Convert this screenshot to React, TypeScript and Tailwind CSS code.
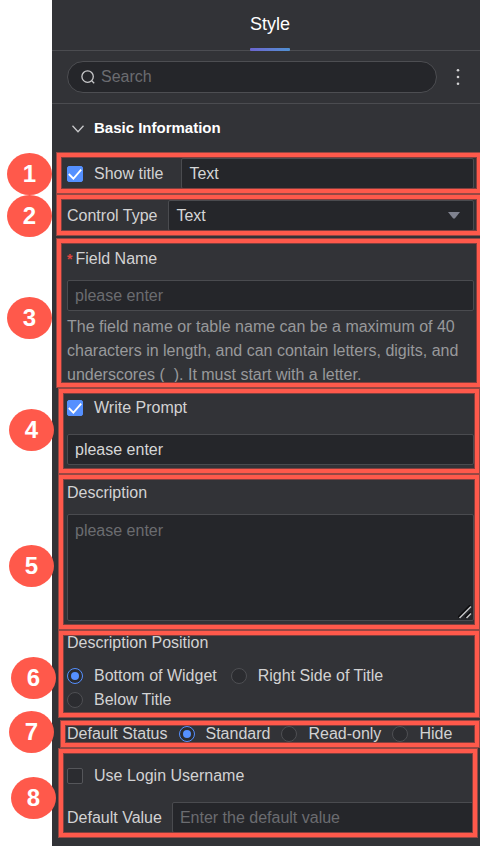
import { type InputHTMLAttributes, type ReactNode, useState } from "react";
import clsx from "clsx";

const fieldStyles =
  "h-[31px] min-w-0 flex-1 rounded-[2px] border border-[#4a4b4f] bg-[#25262a] px-[7px] text-base text-[#d6d6d7] placeholder-[#6b6c70] outline-none";

/* A form block with its numbered callout and the red frame laid over it. */
function Callout({
  number,
  badge,
  className,
  children,
}: {
  number: number;
  badge: string;
  className: string;
  children: ReactNode;
}) {
  return (
    <section className={clsx("relative", className)}>
      {children}
      <div
        aria-hidden="true"
        className="pointer-events-none absolute inset-0 border-4 border-[#ff594b] shadow-[inset_0_0_0_1px_#823f3e] outline-1 outline-[#964743]"
      />
      <span
        className={clsx(
          "absolute flex h-[42px] w-[45px] items-center justify-center rounded-[50%] bg-[#ff594b] text-2xl font-bold text-white",
          badge,
        )}
      >
        {number}
      </span>
    </section>
  );
}

function Checkbox({ label, ...props }: { label: string } & InputHTMLAttributes<HTMLInputElement>) {
  return (
    <label className="flex items-center gap-[11px] leading-6">
      <span className="grid size-4 shrink-0">
        <input
          type="checkbox"
          className="peer col-start-1 row-start-1 size-4 appearance-none rounded-[2px] border border-[#55565a] bg-[#2b2c30] checked:border-[#5590ff] checked:bg-[#5590ff]"
          {...props}
        />
        <svg
          viewBox="0 0 16 16"
          fill="none"
          aria-hidden="true"
          className="pointer-events-none invisible relative col-start-1 row-start-1 size-4 peer-checked:visible"
        >
          <path d="M1.8 8 L6.4 12.6 L14.2 3.6" stroke="#fff" strokeWidth="1.8" />
        </svg>
      </span>
      {label}
    </label>
  );
}

function Radio({ label, ...props }: { label: string } & InputHTMLAttributes<HTMLInputElement>) {
  return (
    <label className="flex items-center gap-[11px] leading-6 whitespace-nowrap">
      <span className="grid size-4 shrink-0 place-items-center">
        <input
          type="radio"
          className="peer col-start-1 row-start-1 size-4 appearance-none rounded-full border border-[#4e4f53] bg-[#2b2c30] checked:border-[#5590ff]"
          {...props}
        />
        <span className="pointer-events-none invisible relative col-start-1 row-start-1 size-2 rounded-full bg-[#5590ff] peer-checked:visible" />
      </span>
      {label}
    </label>
  );
}

const positions = ["Bottom of Widget", "Right Side of Title", "Below Title"];
const statuses = ["Standard", "Read-only", "Hide"];

export default function App() {
  const [position, setPosition] = useState(positions[0]);
  const [status, setStatus] = useState(statuses[0]);

  return (
    <div className="min-h-screen overflow-x-clip bg-white pl-[52px] font-['Liberation_Sans',Arial,sans-serif] text-base text-[#d2d2d3]">
      <main className="min-h-screen bg-[#323337]">
        <nav className="flex h-[51px] justify-center border-b border-[#4b4c50] pl-2">
          <button type="button" className="-mb-px flex flex-col text-lg text-white">
            <span className="flex flex-1 items-center">Style</span>
            <span className="h-[3px] w-full rounded-[1px] bg-linear-to-r from-[#6b65cf] to-[#4f90d2]" />
          </button>
        </nav>

        <div className="flex items-center gap-3 border-b border-[#4b4c50] py-[10px] pr-[13px] pl-[15px]">
          <label className="flex h-8 min-w-0 flex-1 items-center gap-1.5 rounded-full border border-[#4d4e52] bg-[#25262a] px-[13px]">
            <svg width="14" height="14" viewBox="0 0 14 14" fill="none" stroke="#c8c8ca" strokeWidth="1.3" aria-hidden="true" className="shrink-0">
              <circle cx="6.6" cy="6.6" r="5.7" />
              <path d="M10.7 10.7 L13.2 13.2" />
            </svg>
            <input
              type="search"
              aria-label="Search"
              placeholder="Search"
              className="min-w-0 flex-1 bg-transparent placeholder-[#6b6c70] outline-none"
            />
          </label>
          <button type="button" aria-label="More options" className="flex w-[18px] justify-center">
            <svg width="4" height="18" viewBox="0 0 4 18" fill="#d2d2d3" aria-hidden="true">
              <circle cx="2" cy="2.2" r="1.3" />
              <circle cx="2" cy="9" r="1.3" />
              <circle cx="2" cy="15.8" r="1.3" />
            </svg>
          </button>
        </div>

        <h2>
          <button type="button" aria-expanded="true" className="flex h-[49px] items-center gap-2.5 pl-5 text-[15px] font-bold text-white">
            <svg width="12" height="8" viewBox="0 0 12 8" fill="none" stroke="#c8c8ca" strokeWidth="1.3" aria-hidden="true">
              <path d="M0.5 0.8 L6 6.8 L11.5 0.8" />
            </svg>
            Basic Information
          </button>
        </h2>

        <Callout number={1} badge="top-0 -left-[50px]" className="-mr-px ml-[5px] h-10 pt-[5px] pr-[7px] pl-2.5">
          <div className="flex items-center gap-[18px]">
            <Checkbox label="Show title" defaultChecked />
            <input aria-label="Title" defaultValue="Text" className={fieldStyles} />
          </div>
        </Callout>

        <Callout number={2} badge="top-0 -left-[50px]" className="mt-0.5 -mr-px ml-[5px] h-10 pt-[5px] pr-[7px] pl-2.5">
          <div className="flex items-center gap-[11px]">
            <label htmlFor="control-type">Control Type</label>
            <div className="relative flex min-w-0 flex-1">
              <select id="control-type" className={clsx(fieldStyles, "appearance-none")}>
                <option>Text</option>
              </select>
              <svg
                width="12"
                height="7"
                viewBox="0 0 12 7"
                fill="#7f828f"
                aria-hidden="true"
                className="pointer-events-none absolute top-3 right-3.5"
              >
                <path d="M0 0 H12 L6.8 6.4 H5.2 Z" />
              </svg>
            </div>
          </div>
        </Callout>

        <Callout number={3} badge="top-[58px] -left-[50px]" className="mt-1 -mr-px ml-[5px] pt-2 pr-[7px] pl-2.5">
          <label htmlFor="field-name" className="flex gap-[3px] leading-6">
            <span className="text-sm leading-6 font-bold text-[#e0443f]">*</span>
            Field Name
          </label>
          <div className="mt-[9px] flex">
            <input id="field-name" placeholder="please enter" className={fieldStyles} />
          </div>
          <p className="mt-1 leading-6 text-[#98999b]">
            The field name or table name can be a maximum of 40 characters in length, and can
            contain letters, digits, and underscores (_). It must start with a letter.
          </p>
        </Callout>

        <Callout number={4} badge="top-5 -left-[50px]" className="mt-0.5 mr-px ml-[7px] pt-[7px] pr-[5px] pb-2 pl-2">
          <Checkbox label="Write Prompt" defaultChecked />
          <div className="mt-3.5 flex">
            <input aria-label="Prompt" defaultValue="please enter" className={fieldStyles} />
          </div>
        </Callout>

        <Callout number={5} badge="top-[70px] -left-[50px]" className="mt-0.5 mr-px ml-[7px] pt-1.5 pr-[5px] pb-2 pl-2">
          <label htmlFor="description" className="block leading-6">
            Description
          </label>
          <div className="relative mt-[9px] flex">
            <textarea
              id="description"
              placeholder="please enter"
              className="h-[107px] w-full resize-none rounded-[2px] border border-[#4a4b4f] bg-[#25262a] px-[7px] py-1 leading-6 placeholder-[#6b6c70] outline-none"
            />
            <svg
              width="14"
              height="14"
              viewBox="0 0 14 14"
              fill="none"
              aria-hidden="true"
              className="pointer-events-none absolute right-0.5 bottom-0.5"
            >
              <path d="M0.5 12.5 L12.5 0.5 M7.5 12.5 L12.5 7.5" stroke="#0c0c0e" strokeWidth="2.6" />
              <path d="M1.5 13 L13 1.5 M8.5 13 L13 8.5" stroke="#c4c4c6" strokeWidth="1.5" />
            </svg>
          </div>
        </Callout>

        <Callout number={6} badge="top-[26px] -left-12" className="mt-0.5 mr-px ml-[7px] pr-[5px] pb-[5px] pl-2">
          <fieldset>
            <legend className="leading-6">Description Position</legend>
            <div className="mt-[9px] flex flex-wrap gap-x-3.5">
              {positions.map((p) => (
                <Radio key={p} name="position" label={p} checked={position === p} onChange={() => setPosition(p)} />
              ))}
            </div>
          </fieldset>
        </Callout>

        <Callout number={7} badge="-top-2.5 -left-[52px]" className="mt-1 mr-px ml-[9px] pr-[5px] pl-1.5">
          <div role="radiogroup" aria-labelledby="default-status" className="flex h-[26px] items-center gap-[11px]">
            <span id="default-status" className="whitespace-nowrap">
              Default Status
            </span>
            {statuses.map((s) => (
              <Radio key={s} name="status" label={s} checked={status === s} onChange={() => setStatus(s)} />
            ))}
          </div>
        </Callout>

        <Callout number={8} badge="top-7 -left-12" className="mt-0.5 mr-[3px] ml-[7px] pt-[15px] pr-[3px] pb-1 pl-2">
          <Checkbox label="Use Login Username" />
          <div className="mt-3.5 flex items-center gap-2.5">
            <label htmlFor="default-value">Default Value</label>
            <input id="default-value" placeholder="Enter the default value" className={fieldStyles} />
          </div>
        </Callout>
      </main>
    </div>
  );
}
